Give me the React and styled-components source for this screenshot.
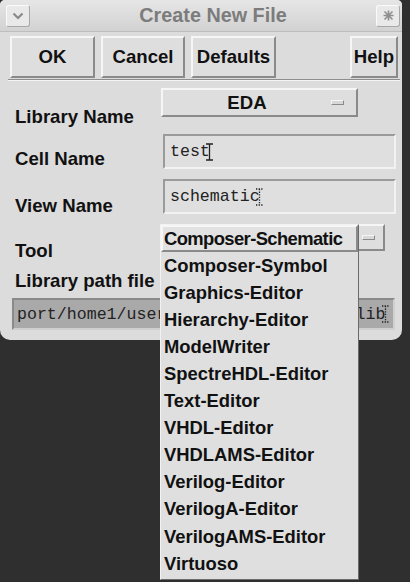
import React from "react";
import styled, { createGlobalStyle, css } from "styled-components";

const Global = createGlobalStyle`
  html, body { margin: 0; padding: 0; background: #2e2e2e; }
  #root { width: 410px; height: 582px; }
`;

const raised = css`
  border-style: solid;
  border-width: 2px;
  border-color: #f6f6f6 #8a8a8a #8a8a8a #f6f6f6;
`;
const sunken = css`
  border-style: solid;
  border-width: 2px;
  border-color: #9a9a9a #f2f2f2 #f2f2f2 #9a9a9a;
`;

const Page = styled.div`
  position: relative;
  width: 410px;
  height: 582px;
  overflow: hidden;
  background: #2f2f2f;
  font-family: "Liberation Sans", Arial, sans-serif;
`;

const Dialog = styled.div`
  width: 402px;
  background: #dcdcdc;
  border-radius: 5px 5px 10px 10px;
  display: flex;
  flex-direction: column;
  padding-bottom: 10px;
  box-sizing: border-box;
  overflow: hidden;
`;

const TitleBar = styled.div`
  height: 32px;
  display: flex;
  align-items: center;
  padding: 0 2px 0 6px;
  background: linear-gradient(#e6e6e6, #d2d2d2);
  border-bottom: 1px solid #bdbdbd;
  box-sizing: border-box;
`;

const TitleButton = styled.div`
  width: 22px;
  height: 20px;
  display: flex;
  align-items: center;
  justify-content: center;
  background: #e9e9e9;
  border: 1px solid;
  border-color: #fafafa #a8a8a8 #a8a8a8 #fafafa;
  border-radius: 3px;
`;

const Title = styled.div`
  flex: 1;
  text-align: center;
  padding-left: 20px;
  font-size: 19.8px;
  font-weight: bold;
  color: #7c7c7c;
`;

const ButtonBar = styled.div`
  display: flex;
  gap: 6px;
  padding: 4px 4px 0 10px;
`;

const ActionButton = styled.div`
  ${raised};
  width: ${(p) => p.$w}px;
  height: 42px;
  box-sizing: border-box;
  display: flex;
  align-items: center;
  justify-content: center;
  background: #dedede;
  font-size: 18.6px;
  font-weight: bold;
  color: #111;
`;

const Spacer = styled.div`
  flex: 1;
`;

const Separator = styled.div`
  margin: 1px 2px 0 8px;
  height: 0;
  border-top: 1px solid #8e8e8e;
  border-bottom: 1px solid #f4f4f4;
`;

const Form = styled.div`
  display: flex;
  flex-direction: column;
  padding: 7px 6px 0 15px;
`;

const Row = styled.div`
  display: flex;
  height: ${(p) => p.$h}px;
  margin-top: ${(p) => p.$top || 0}px;
`;

const Label = styled.div`
  width: 146px;
  align-self: flex-end;
  line-height: 20px;
  margin-bottom: ${(p) => p.$mb || 0}px;
  font-size: 18.6px;
  font-weight: bold;
  color: #111;
  white-space: nowrap;
`;

const OptionButton = styled.div`
  ${raised};
  width: ${(p) => p.$w}px;
  height: ${(p) => p.$h}px;
  box-sizing: border-box;
  display: flex;
  align-items: center;
  background: #dedede;
  padding-right: ${(p) => p.$pr}px;
`;

const OptionText = styled.span`
  flex: 1;
  text-align: center;
  font-size: 18.6px;
  font-weight: bold;
  color: #111;
`;

const Indicator = styled.span`
  width: 11px;
  height: 3px;
  border: 1px solid;
  border-color: #f6f6f6 #8a8a8a #8a8a8a #f6f6f6;
  background: #d8d8d8;
`;

const TextField = styled.div`
  ${sunken};
  margin-left: 2px;
  width: 233px;
  height: 35px;
  box-sizing: border-box;
  display: flex;
  align-items: center;
  padding-left: 5px;
  background: #dfdfdf;
  font-family: "Liberation Mono", "Courier New", monospace;
  font-size: 16.6px;
  color: #222;
  white-space: nowrap;
`;

const PathLabel = styled(Label)`
  align-self: flex-start;
  margin-top: 13px;
`;

const PathField = styled(TextField)`
  margin: 7px 0 0 -3px;
  padding-left: 3px;
  width: 383px;
  height: 32px;
  background: #a9a9a9;
  border-color: #8a8a8a #cfcfcf #cfcfcf #8a8a8a;
  overflow: hidden;
`;

const Cursor = styled.svg`
  margin-left: ${(p) => p.$ml}px;
  flex: none;
`;

const Menu = styled.div`
  position: absolute;
  left: 160px;
  top: 224px;
  width: 199px;
  background: #dfdfdf;
  border: 1px solid;
  border-color: #f2f2f2 #6a6a6a #6a6a6a #f2f2f2;
  box-sizing: border-box;
  display: flex;
  flex-direction: column;
  padding-bottom: 2px;
`;

const MenuItem = styled.div`
  height: 27.1px;
  box-sizing: border-box;
  display: flex;
  align-items: center;
  padding-left: 3px;
  font-size: 18.4px;
  font-weight: bold;
  color: #111;
  white-space: nowrap;
  ${(p) =>
    p.$active &&
    css`
      ${raised};
      padding-left: 1px;
      letter-spacing: -0.6px;
      background: #e2e2e2;
    `}
`;

const IBeam = ({ ml, dotted }) => (
  <Cursor $ml={ml} width="7" height="18" viewBox="0 0 7 18">
    <path
      d="M0 1H7M3.5 1V17M0 17H7"
      stroke="#222"
      strokeWidth="1.3"
      strokeDasharray={dotted ? "1.3 1.3" : undefined}
      fill="none"
    />
  </Cursor>
);

const tools = [
  "Composer-Schematic",
  "Composer-Symbol",
  "Graphics-Editor",
  "Hierarchy-Editor",
  "ModelWriter",
  "SpectreHDL-Editor",
  "Text-Editor",
  "VHDL-Editor",
  "VHDLAMS-Editor",
  "Verilog-Editor",
  "VerilogA-Editor",
  "VerilogAMS-Editor",
  "Virtuoso",
];

export default function App() {
  return (
    <Page>
      <Global />
      <Dialog>
        <TitleBar>
          <TitleButton>
            <svg width="12" height="8" viewBox="0 0 12 8">
              <path d="M1.5 1.5L6 6L10.5 1.5" stroke="#8a8a8a" strokeWidth="2.2" fill="none" />
            </svg>
          </TitleButton>
          <Title>Create New File</Title>
          <TitleButton>
            <svg width="11" height="11" viewBox="0 0 11 11">
              <path d="M1.5 1.5L9.5 9.5M9.5 1.5L1.5 9.5M5.5 0.5V10.5M0.5 5.5H10.5" stroke="#8f8f8f" strokeWidth="1.6" fill="none" />
            </svg>
          </TitleButton>
        </TitleBar>
        <ButtonBar>
          <ActionButton $w={85}>OK</ActionButton>
          <ActionButton $w={84}>Cancel</ActionButton>
          <ActionButton $w={85}>Defaults</ActionButton>
          <Spacer />
          <ActionButton $w={48}>Help</ActionButton>
        </ButtonBar>
        <Separator />
        <Form>
          <Row $h={36}>
            <Label $mb={-3}>Library Name</Label>
            <OptionButton $w={197} $h={29} $pr={12}>
              <OptionText>EDA</OptionText>
              <Indicator />
            </OptionButton>
          </Row>
          <Row $h={35} $top={10}>
            <Label $mb={0}>Cell Name</Label>
            <TextField>
              test
              <IBeam ml={-4} />
            </TextField>
          </Row>
          <Row $h={35} $top={10}>
            <Label $mb={-2}>View Name</Label>
            <TextField>
              schematic
              <IBeam ml={-4} dotted />
            </TextField>
          </Row>
          <Row $h={34} $top={10}>
            <Label $mb={-3}>Tool</Label>
            <OptionButton $w={224} $h={27} $pr={8}>
              <Spacer />
              <Indicator />
            </OptionButton>
          </Row>
          <PathLabel>Library path file</PathLabel>
          <PathField>
            port/home1/user1/cadence/work/cds.lib
            <IBeam ml={-3} dotted />
          </PathField>
        </Form>
      </Dialog>
      <Menu>
        {tools.map((t, i) => (
          <MenuItem key={t} $active={i === 0}>
            {t}
          </MenuItem>
        ))}
      </Menu>
    </Page>
  );
}
